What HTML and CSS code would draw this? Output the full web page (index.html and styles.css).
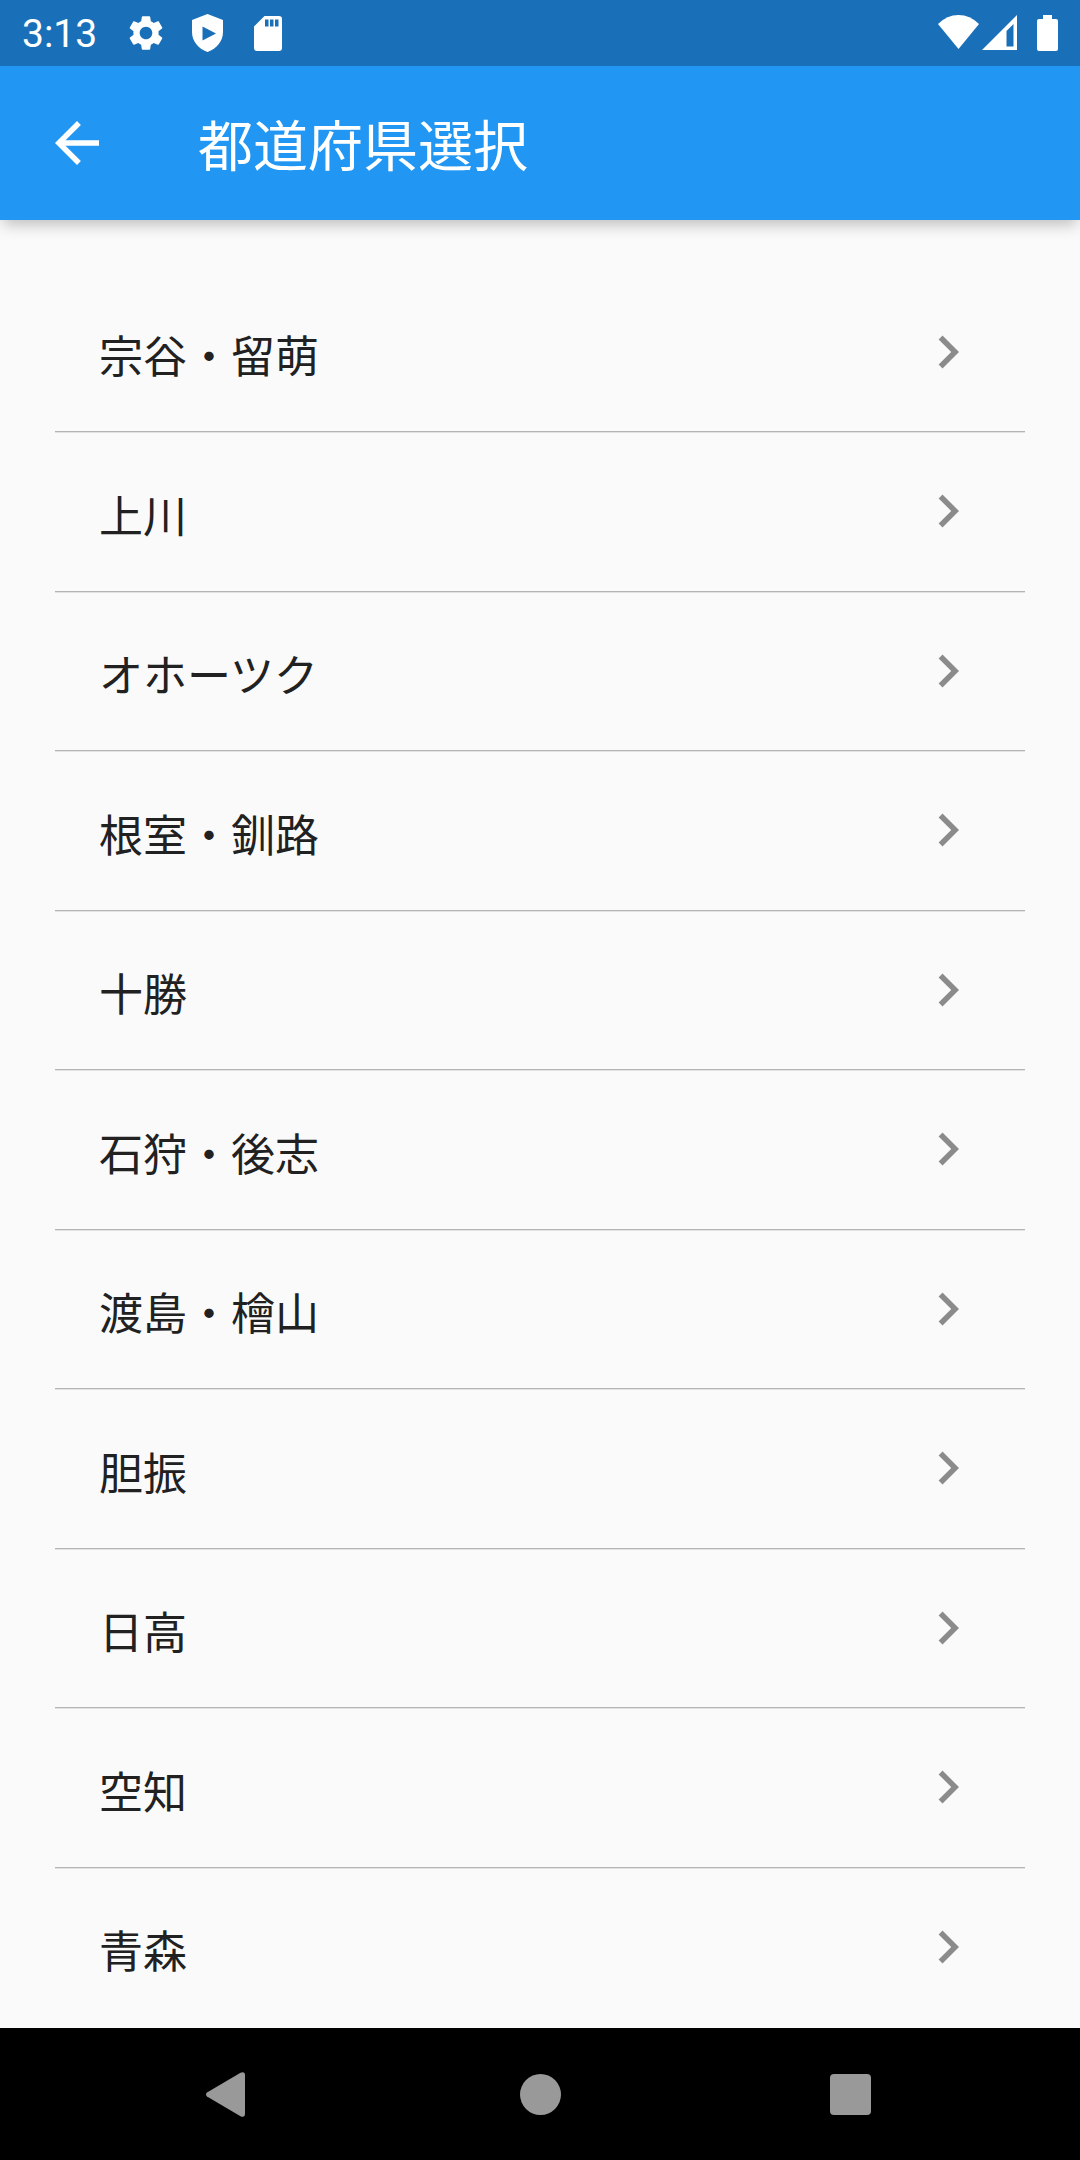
FILE: index.html
```html
<!DOCTYPE html>
<html lang="ja">
<head>
<meta charset="utf-8">
<title>都道府県選択</title>
<link rel="stylesheet" href="styles.css">
</head>
<body>
<svg width="0" height="0" class="defs">
  <symbol id="chevron" viewBox="0 0 24 24"><path d="M10 6L8.59 7.41 13.17 12l-4.58 4.59L10 18l6-6z"/></symbol>
</svg>
<div class="screen">
  <header class="status">
    <span class="time">3:13</span>
    <svg class="gear" viewBox="0 0 24 24"><path d="M19.14 12.94c.04-.3.06-.61.06-.94 0-.32-.02-.64-.07-.94l2.03-1.58c.18-.14.23-.41.12-.61l-1.92-3.32c-.12-.22-.37-.29-.59-.22l-2.39.96c-.5-.38-1.03-.7-1.62-.94l-.36-2.54c-.04-.24-.24-.41-.48-.41h-3.84c-.24 0-.43.17-.47.41l-.36 2.54c-.59.24-1.13.57-1.62.94l-2.39-.96c-.22-.08-.47 0-.59.22L2.74 8.87c-.12.21-.08.47.12.61l2.03 1.58c-.05.3-.09.63-.09.94s.02.64.07.94l-2.03 1.58c-.18.14-.23.41-.12.61l1.92 3.32c.12.22.37.29.59.22l2.39-.96c.5.38 1.03.7 1.62.94l.36 2.54c.05.24.24.41.48.41h3.84c.24 0 .44-.17.47-.41l.36-2.54c.59-.24 1.13-.56 1.62-.94l2.39.96c.22.08.47 0 .59-.22l1.92-3.32c.12-.22.07-.47-.12-.61l-2.01-1.58zM12 15.6c-1.98 0-3.6-1.62-3.6-3.6s1.62-3.6 3.6-3.6 3.6 1.62 3.6 3.6-1.62 3.6-3.6 3.6z"/></svg>
    <svg class="shield" viewBox="0 0 31 38"><path fill-rule="evenodd" d="M15.500 0L31 6v12c0 9-6 16.500-15.500 20C6 34.500 0 27 0 18V6zM10.500 12.500v14L24 19.500z"/></svg>
    <svg class="sd" viewBox="0 0 28 35"><path fill-rule="evenodd" d="M10.500 0H25a3 3 0 0 1 3 3v29a3 3 0 0 1-3 3H3a3 3 0 0 1-3-3V10.500zM11 3.500v7h3.500v-7zM16 3.500v7h3.500v-7zM21 3.500v7h3.500v-7z"/></svg>
    <span class="spacer"></span>
    <svg class="wifi" viewBox="0 0 41 34"><path d="M0 9Q9 0 20.500 0T41 9L20.500 34z"/></svg>
    <svg class="signal" viewBox="0 0 35 35"><path fill-rule="evenodd" d="M35 0v35H0zM24.500 16v15.500H31.500V9z"/></svg>
    <svg class="battery" viewBox="0 0 21 36"><path d="M6 0h9v4h4a2 2 0 0 1 2 2v28a2 2 0 0 1-2 2H2a2 2 0 0 1-2-2V6a2 2 0 0 1 2-2h4z"/></svg>
  </header>
  <div class="appbar">
    <svg class="back" viewBox="0 0 24 24"><path d="M20 11H7.830l5.590-5.590L12 4l-8 8 8 8 1.410-1.410L7.830 13H20z"/></svg>
    <h1 class="title">都道府県選択</h1>
  </div>
  <main class="list">
    <div class="row"><span class="name">宗谷・留萌</span><svg class="chevron"><use href="#chevron"/></svg></div>
    <div class="row"><span class="name">上川</span><svg class="chevron"><use href="#chevron"/></svg></div>
    <div class="row"><span class="name">オホーツク</span><svg class="chevron"><use href="#chevron"/></svg></div>
    <div class="row"><span class="name">根室・釧路</span><svg class="chevron"><use href="#chevron"/></svg></div>
    <div class="row"><span class="name">十勝</span><svg class="chevron"><use href="#chevron"/></svg></div>
    <div class="row"><span class="name">石狩・後志</span><svg class="chevron"><use href="#chevron"/></svg></div>
    <div class="row"><span class="name">渡島・檜山</span><svg class="chevron"><use href="#chevron"/></svg></div>
    <div class="row"><span class="name">胆振</span><svg class="chevron"><use href="#chevron"/></svg></div>
    <div class="row"><span class="name">日高</span><svg class="chevron"><use href="#chevron"/></svg></div>
    <div class="row"><span class="name">空知</span><svg class="chevron"><use href="#chevron"/></svg></div>
    <div class="row"><span class="name">青森</span><svg class="chevron"><use href="#chevron"/></svg></div>
  </main>
  <nav class="navbar">
    <svg class="nav-back" viewBox="0 0 39 45"><path d="M1 20.500L34.500 .8Q39-1 39 3.500v38Q39 46 34.500 44.200L1 24.500q-2-2 0-4z"/></svg>
    <span class="nav-home"></span>
    <span class="nav-recent"></span>
  </nav>
</div>
</body>
</html>
```
FILE: styles.css
```css
* { box-sizing: border-box; }
body { margin: 0; font-family: Roboto, "Noto Sans CJK JP", sans-serif; }
svg { display: block; flex: none; fill: currentColor; }
.defs { position: absolute; }
.screen { width: 1080px; height: 2160px; display: flex; flex-direction: column; overflow: hidden; background: #fafafa; }

.status { flex: none; height: 66px; padding: 0 22px; display: flex; align-items: flex-start; background: #1a70b8; color: #fff; z-index: 2; }
.time { width: 103px; margin-top: 11px; font-size: 39px; line-height: 46px; }
.gear { width: 42px; height: 42px; margin-top: 12px; }
.shield { width: 31px; height: 38px; margin: 14px 0 0 25px; }
.sd { width: 28px; height: 35px; margin: 16px 0 0 31px; }
.spacer { flex: 1; }
.wifi { width: 41px; height: 34px; margin-top: 15px; }
.signal { width: 35px; height: 35px; margin: 15px 0 0 3px; }
.battery { width: 21px; height: 36px; margin: 15px 0 0 20px; }

.appbar { flex: none; height: 154px; padding-left: 44px; display: flex; align-items: center; background: #2196f3; color: #fff; z-index: 1; box-shadow: 0 7px 15px -3px rgba(0,0,0,.26); }
.back { width: 66px; height: 66px; }
.title { margin: 8px 0 0 88px; font-size: 55px; line-height: 80px; font-weight: 400; }

.list { flex: 1; min-height: 0; padding: 53.5px 55px 0; overflow: hidden; }
.row { height: 159.5px; padding: 0 44px; display: flex; align-items: center; justify-content: space-between; color: #212121; background: linear-gradient(#b4b4b4 50%, #e3e3e3 50%) bottom / 100% 2px no-repeat; }
.row:last-child { background: none; }
.name { margin-top: 10px; font-size: 44px; line-height: 64px; }
.chevron { width: 66px; height: 66px; margin-bottom: 3px; color: #8b8b8b; }

.navbar { flex: none; height: 132px; padding: 0 209px 0 206px; display: flex; align-items: center; justify-content: space-between; background: #000; color: #999; }
.nav-back { width: 39px; height: 45px; }
.nav-home { width: 41px; height: 41px; margin-left: 5px; border-radius: 50%; background: #999; }
.nav-recent { width: 41px; height: 41px; border-radius: 4px; background: #999; }
```
